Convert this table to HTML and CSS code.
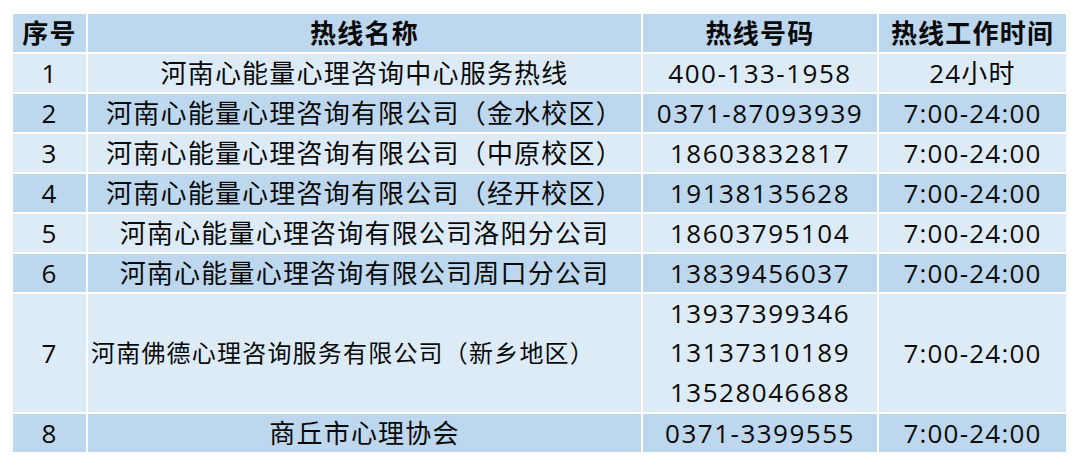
FILE: index.html
```html
<!DOCTYPE html>
<html lang="zh-CN">
<head>
<meta charset="utf-8">
<title>心理援助热线</title>
<link rel="stylesheet" href="styles.css">
</head>
<body>
<table class="hotlines">
  <colgroup>
    <col class="c-no">
    <col class="c-name">
    <col class="c-phone">
    <col class="c-time">
  </colgroup>
  <thead>
    <tr class="dark">
      <th>序号</th>
      <th>热线名称</th>
      <th>热线号码</th>
      <th>热线工作时间</th>
    </tr>
  </thead>
  <tbody>
    <tr class="light">
      <td>1</td>
      <td>河南心能量心理咨询中心服务热线</td>
      <td class="phone">400-133-1958</td>
      <td>24小时</td>
    </tr>
    <tr class="dark">
      <td>2</td>
      <td>河南心能量心理咨询有限公司（金水校区）</td>
      <td class="phone">0371-87093939</td>
      <td>7:00-24:00</td>
    </tr>
    <tr class="light">
      <td>3</td>
      <td>河南心能量心理咨询有限公司（中原校区）</td>
      <td class="phone">18603832817</td>
      <td>7:00-24:00</td>
    </tr>
    <tr class="dark">
      <td>4</td>
      <td>河南心能量心理咨询有限公司（经开校区）</td>
      <td class="phone">19138135628</td>
      <td>7:00-24:00</td>
    </tr>
    <tr class="light">
      <td>5</td>
      <td>河南心能量心理咨询有限公司洛阳分公司</td>
      <td class="phone">18603795104</td>
      <td>7:00-24:00</td>
    </tr>
    <tr class="dark">
      <td>6</td>
      <td>河南心能量心理咨询有限公司周口分公司</td>
      <td class="phone">13839456037</td>
      <td>7:00-24:00</td>
    </tr>
    <tr class="light tall">
      <td>7</td>
      <td class="name-small">河南佛德心理咨询服务有限公司（新乡地区）</td>
      <td class="phone multi">13937399346<br>13137310189<br>13528046688</td>
      <td>7:00-24:00</td>
    </tr>
    <tr class="dark">
      <td>8</td>
      <td>商丘市心理协会</td>
      <td class="phone">0371-3399555</td>
      <td>7:00-24:00</td>
    </tr>
  </tbody>
</table>
</body>
</html>
```
FILE: styles.css
```css
html, body {
  margin: 0;
  padding: 0;
  background: #ffffff;
}

body {
  padding: 12px 0 0 11px;
  font-family: "Open Sans", "Noto Sans CJK SC", sans-serif;
  color: #0a0a0a;
}

.hotlines {
  table-layout: fixed;
  border-collapse: separate;
  border-spacing: 2px;
  width: 1057px;
}

.c-no { width: 73px; }
.c-name { width: 553px; }
.c-phone { width: 234px; }
.c-time { width: 187px; }

.hotlines th,
.hotlines td {
  height: 38px;
  padding: 0;
  text-align: center;
  vertical-align: middle;
  font-size: 26px;
  letter-spacing: 1.2px;
  line-height: 38px;
  white-space: nowrap;
  overflow: hidden;
}

.hotlines th {
  font-weight: 700;
}

.hotlines td {
  font-weight: 400;
}

.hotlines td.phone {
  letter-spacing: 1.5px;
}

.dark th,
.dark td {
  background: #bdd7ee;
}

.light td {
  background: #ddebf7;
}

.tall td {
  height: 118px;
}

.hotlines td.multi {
  line-height: 39.3px;
}

.hotlines td.name-small {
  font-size: 24px;
  text-align: left;
  padding-left: 3px;
}
```
